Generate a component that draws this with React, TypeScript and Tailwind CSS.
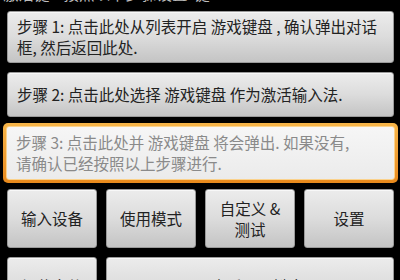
const font = { fontFamily: '"Noto Sans CJK SC", "DejaVu Sans", sans-serif' }

const btn =
  'rounded-[3px] border border-[#9a9a9a] bg-gradient-to-b from-[#ececec] via-[#dcdcdc] to-[#c4c4c4] text-[#222] text-[15.5px] leading-[21px] shadow-[inset_0_1px_0_#f8f8f8]'

export default function App() {
  return (
    <div className="w-[400px] h-[280px] overflow-hidden bg-black" style={font}>
      {/* cut-off title: only the bottom of the glyphs shows */}
      <div className="h-[11px] overflow-hidden">
        <div className="h-[3px] flex items-end">
          <div className="shrink-0 pl-[3px] text-[15.5px] leading-[20px] text-[#bdbdbd] whitespace-nowrap">
            激活键 &nbsp;&nbsp;&nbsp;按照以下步骤设置 &nbsp;键
          </div>
        </div>
      </div>

      <div className="flex flex-col pl-[7px] pr-[6px] gap-[9px]">
        <div className={`${btn} h-[52px] px-[9px] flex items-center whitespace-nowrap`}>
          <p>
            步骤 1: 点击此处从列表开启 游戏键盘 , 确认弹出对话
            <br />
            框, 然后返回此处.
          </p>
        </div>

        <div className={`${btn} h-[45px] px-[9px] flex items-center whitespace-nowrap`}>
          <p>步骤 2: 点击此处选择 游戏键盘 作为激活输入法.</p>
        </div>

        {/* focused step */}
        <div className="mx-[-4px] mt-[-3px] rounded-[5px] bg-gradient-to-b from-[#f7b548] to-[#e98a1c] p-[3px]">
          <div className="h-[54px] rounded-[3px] border border-[#fbd28c] bg-gradient-to-b from-[#f6f6f6] to-[#ebebeb] px-[9px] flex items-center whitespace-nowrap text-[#8a8a8a] text-[15.5px] leading-[21px]">
            <p>
              步骤 3: 点击此处并 游戏键盘 将会弹出. 如果没有,
              <br />
              请确认已经按照以上步骤进行.
            </p>
          </div>
        </div>

        <div className="grid grid-cols-4 gap-[9px] mt-[-3px]">
          <div className={`${btn} h-[59px] flex items-center justify-center text-center`}>输入设备</div>
          <div className={`${btn} h-[59px] flex items-center justify-center text-center`}>使用模式</div>
          <div className={`${btn} h-[59px] flex items-center justify-center text-center`}>
            <p>
              自定义 &amp;
              <br />
              测试
            </p>
          </div>
          <div className={`${btn} h-[59px] flex items-center justify-center text-center`}>设置</div>
        </div>

        <div className="grid grid-cols-4 gap-[9px]">
          <div className={`${btn} h-[59px] flex items-center justify-center text-center`}>加载文件</div>
          <div className={`${btn} col-span-3 h-[59px] flex items-center justify-center text-center`}>
            退出后显示键盘
          </div>
        </div>
      </div>
    </div>
  )
}
